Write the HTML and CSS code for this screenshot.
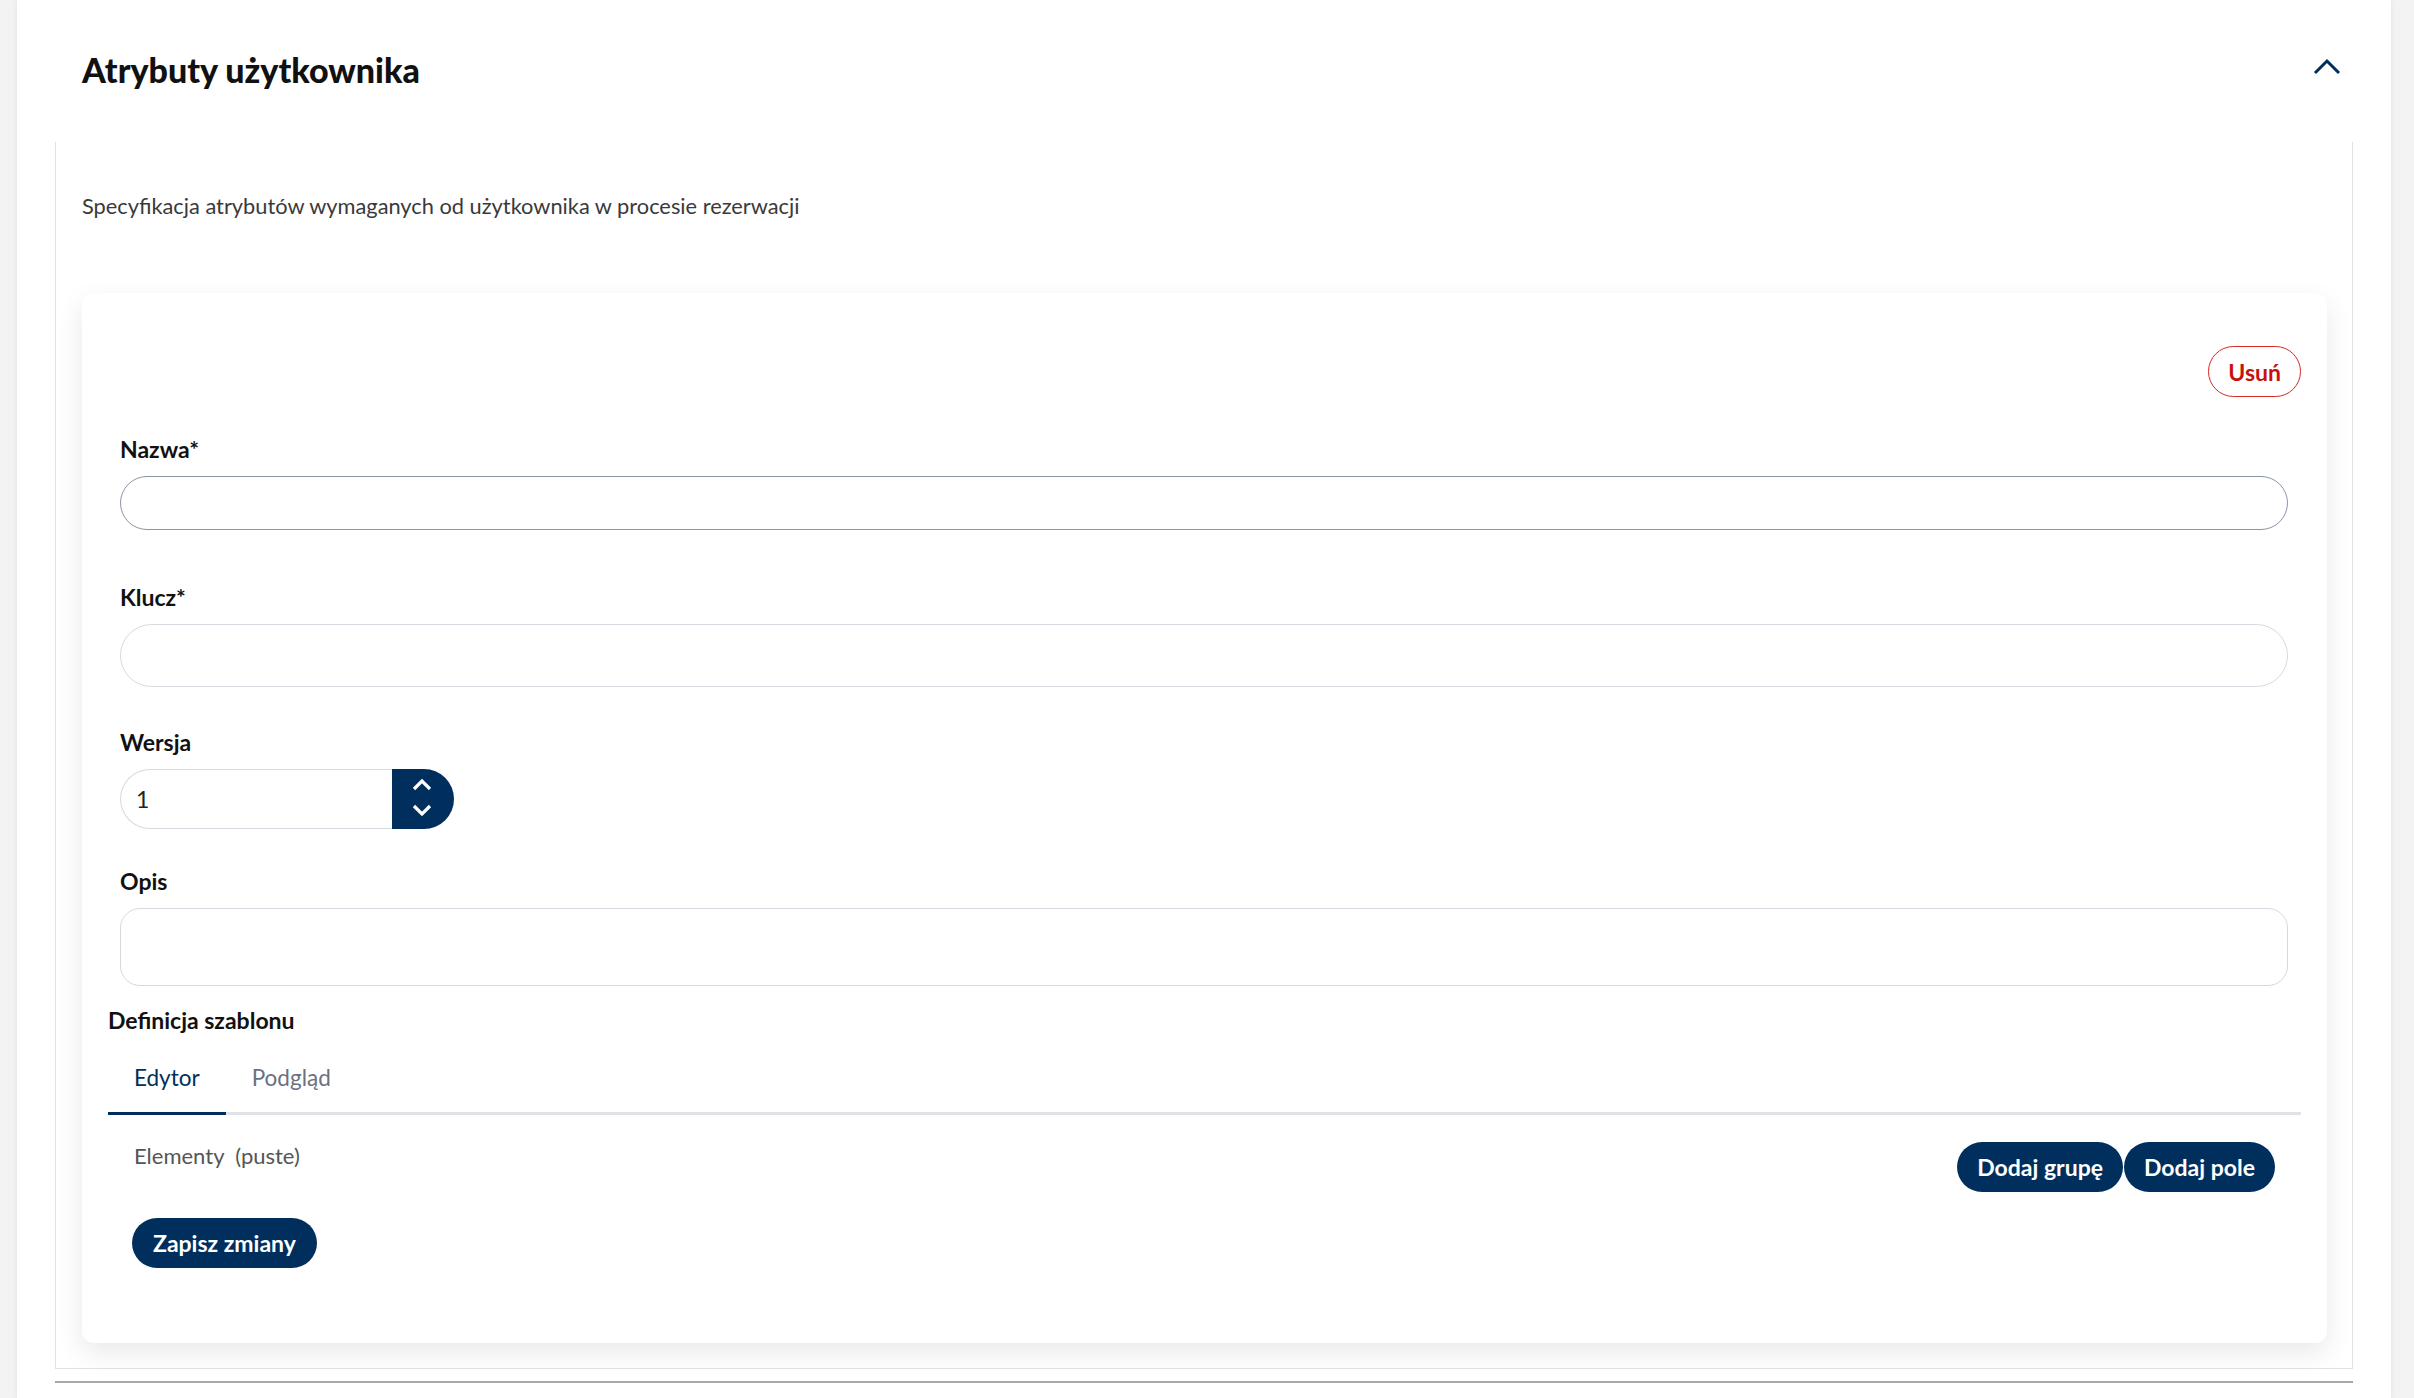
FILE: index.html
```html
<!DOCTYPE html>
<html lang="pl">
<head>
    <meta charset="UTF-8">
    <meta name="viewport" content="width=device-width, initial-scale=1.0">
    <title>Atrybuty użytkownika</title>
    <link rel="stylesheet" href="styles.css">
</head>
<body>
    <div class="page">
        <div class="section-header">
            <h2>Atrybuty użytkownika</h2>
            <button class="collapse-btn" aria-label="Zwiń">
                <svg width="28" height="18" viewBox="0 0 28 18">
                    <polyline points="2,15 14,3 26,15" fill="none" stroke="#002f5e" stroke-width="3"/>
                </svg>
            </button>
        </div>

        <div class="section-body">
            <p class="section-desc">Specyfikacja atrybutów wymaganych od użytkownika w procesie rezerwacji</p>

            <div class="card">
                <div class="card-actions">
                    <button class="btn-outline-danger">Usuń</button>
                </div>

                <div class="field field-nazwa">
                    <label for="nazwa">Nazwa*</label>
                    <input type="text" id="nazwa" class="input input-active">
                </div>

                <div class="field field-klucz">
                    <label for="klucz">Klucz*</label>
                    <input type="text" id="klucz" class="input input-tall">
                </div>

                <div class="field field-wersja">
                    <label for="wersja">Wersja</label>
                    <div class="number-input">
                        <input type="text" id="wersja" value="1">
                        <div class="spinner">
                            <svg width="22" height="14" viewBox="0 0 22 14">
                                <polyline points="3,11 11,3 19,11" fill="none" stroke="#fff" stroke-width="3.2"/>
                            </svg>
                            <svg width="22" height="14" viewBox="0 0 22 14">
                                <polyline points="3,3 11,11 19,3" fill="none" stroke="#fff" stroke-width="3.2"/>
                            </svg>
                        </div>
                    </div>
                </div>

                <div class="field field-opis">
                    <label for="opis">Opis</label>
                    <textarea id="opis" class="textarea"></textarea>
                </div>

                <div class="template">
                    <div class="template-title">Definicja szablonu</div>
                    <div class="tabs">
                        <div class="tab active">Edytor</div>
                        <div class="tab">Podgląd</div>
                    </div>
                    <div class="tab-content">
                        <div class="elements-row">
                            <span class="elements-label">Elementy&nbsp;&nbsp;(puste)</span>
                            <div class="btn-group">
                                <button class="btn-primary">Dodaj grupę</button>
                                <button class="btn-primary">Dodaj pole</button>
                            </div>
                        </div>
                        <button class="btn-primary btn-save">Zapisz zmiany</button>
                    </div>
                </div>
            </div>
        </div>
        <div class="section-divider"></div>
    </div>
</body>
</html>
```

FILE: styles.css
```css
body {
    margin: 0;
    background-color: #f3f3f3;
    font-family: Lato, "Noto Sans", sans-serif;
    color: #111;
}

.page {
    margin: 0 23px 0 17px;
    min-height: 100vh;
    background-color: #fff;
    box-shadow: 0 0 6px rgba(0,0,0,0.08);
    overflow: hidden;
}

.section-header {
    height: 142px;
    display: flex;
    align-items: center;
    justify-content: space-between;
    padding: 0 50px 0 65px;
    box-sizing: border-box;
}

.section-header h2 {
    margin: 0 0 4px 0;
    font-size: 34px;
    font-weight: 900;
}

.collapse-btn {
    border: none;
    background: none;
    padding: 0;
    margin-bottom: 8px;
    cursor: pointer;
    display: flex;
}

.section-body {
    margin: 0 38px;
    border: 1.5px solid #e2e2e6;
    border-top: none;
    padding: 49px 25px 25px 26px;
}

.section-desc {
    margin: 0 0 72px 0;
    font-size: 21.8px;
    line-height: 30px;
    color: #3a3a3a;
}

.card {
    background-color: #fff;
    border-radius: 12px;
    box-shadow: 0 10px 28px rgba(0,0,0,0.09);
    padding: 53px 26px 75px 26px;
}

.card-actions {
    display: flex;
    justify-content: flex-end;
    margin-bottom: 38px;
}

.btn-outline-danger {
    height: 51px;
    padding: 0 19px;
    border: 1.5px solid #d42a22;
    border-radius: 26px;
    background: #fff;
    color: #c8110c;
    font-family: inherit;
    font-size: 23px;
    font-weight: 700;
    cursor: pointer;
}

.field {
    padding: 0 13px 0 12px;
    display: flex;
    flex-direction: column;
}

.field label {
    font-size: 23px;
    font-weight: 700;
    line-height: 28px;
    margin-bottom: 13px;
}

.input {
    height: 54px;
    box-sizing: border-box;
    border: 1.5px solid #d6d9df;
    border-radius: 32px;
    padding: 0 16px;
    font-family: inherit;
    font-size: 21px;
    outline: none;
}

.input-active {
    border-color: #8a94a6;
}

.input-tall {
    height: 63px;
}

.field-nazwa { margin-bottom: 53px; }
.field-klucz { margin-bottom: 41px; }
.field-wersja { margin-bottom: 38px; }
.field-opis { margin-bottom: 20px; }

.number-input {
    display: flex;
    width: 334px;
    height: 60px;
}

.number-input input {
    flex: 1;
    min-width: 0;
    box-sizing: border-box;
    border: 1.5px solid #d6d9df;
    border-right: none;
    border-radius: 30px 0 0 30px;
    padding: 0 15px;
    font-family: inherit;
    font-size: 23px;
    color: #222;
    outline: none;
}

.spinner {
    width: 60px;
    background-color: #002f5e;
    border-radius: 0 30px 30px 0;
    display: flex;
    flex-direction: column;
    align-items: center;
    justify-content: center;
    gap: 11px;
    padding: 0 2px 3px 0;
}

.textarea {
    height: 78px;
    box-sizing: border-box;
    border: 1.5px solid #d6d9df;
    border-radius: 20px;
    padding: 12px 16px;
    font-family: inherit;
    font-size: 21px;
    resize: none;
    outline: none;
}

.template-title {
    font-size: 23px;
    font-weight: 700;
    line-height: 28px;
}

.tabs {
    display: flex;
    margin-top: 13px;
    border-bottom: 3px solid #dfe2e7;
}

.tab {
    padding: 17px 26px 20px 26px;
    font-size: 22.5px;
    line-height: 28px;
    color: #6b7180;
    margin-bottom: -3px;
    border-bottom: 3px solid transparent;
    cursor: pointer;
}

.tab.active {
    color: #002f5e;
    border-bottom-color: #002f5e;
}

.tab-content {
    padding: 27px 26px 0 24px;
}

.elements-row {
    display: flex;
    justify-content: space-between;
    align-items: flex-start;
    margin-bottom: 26px;
}

.elements-label {
    font-size: 22px;
    line-height: 28px;
    color: #555;
    padding-left: 2px;
}

.btn-group {
    display: flex;
    gap: 1px;
}

.btn-primary {
    height: 50px;
    padding: 0 20px;
    border: none;
    border-radius: 25px;
    background-color: #002f5e;
    color: #fff;
    font-family: inherit;
    font-size: 23px;
    font-weight: 700;
    cursor: pointer;
}

.btn-save {
    padding: 0 21px;
}

.section-divider {
    margin: 12px 38px 0 38px;
    border-top: 2px solid #a8a8a8;
}
```
